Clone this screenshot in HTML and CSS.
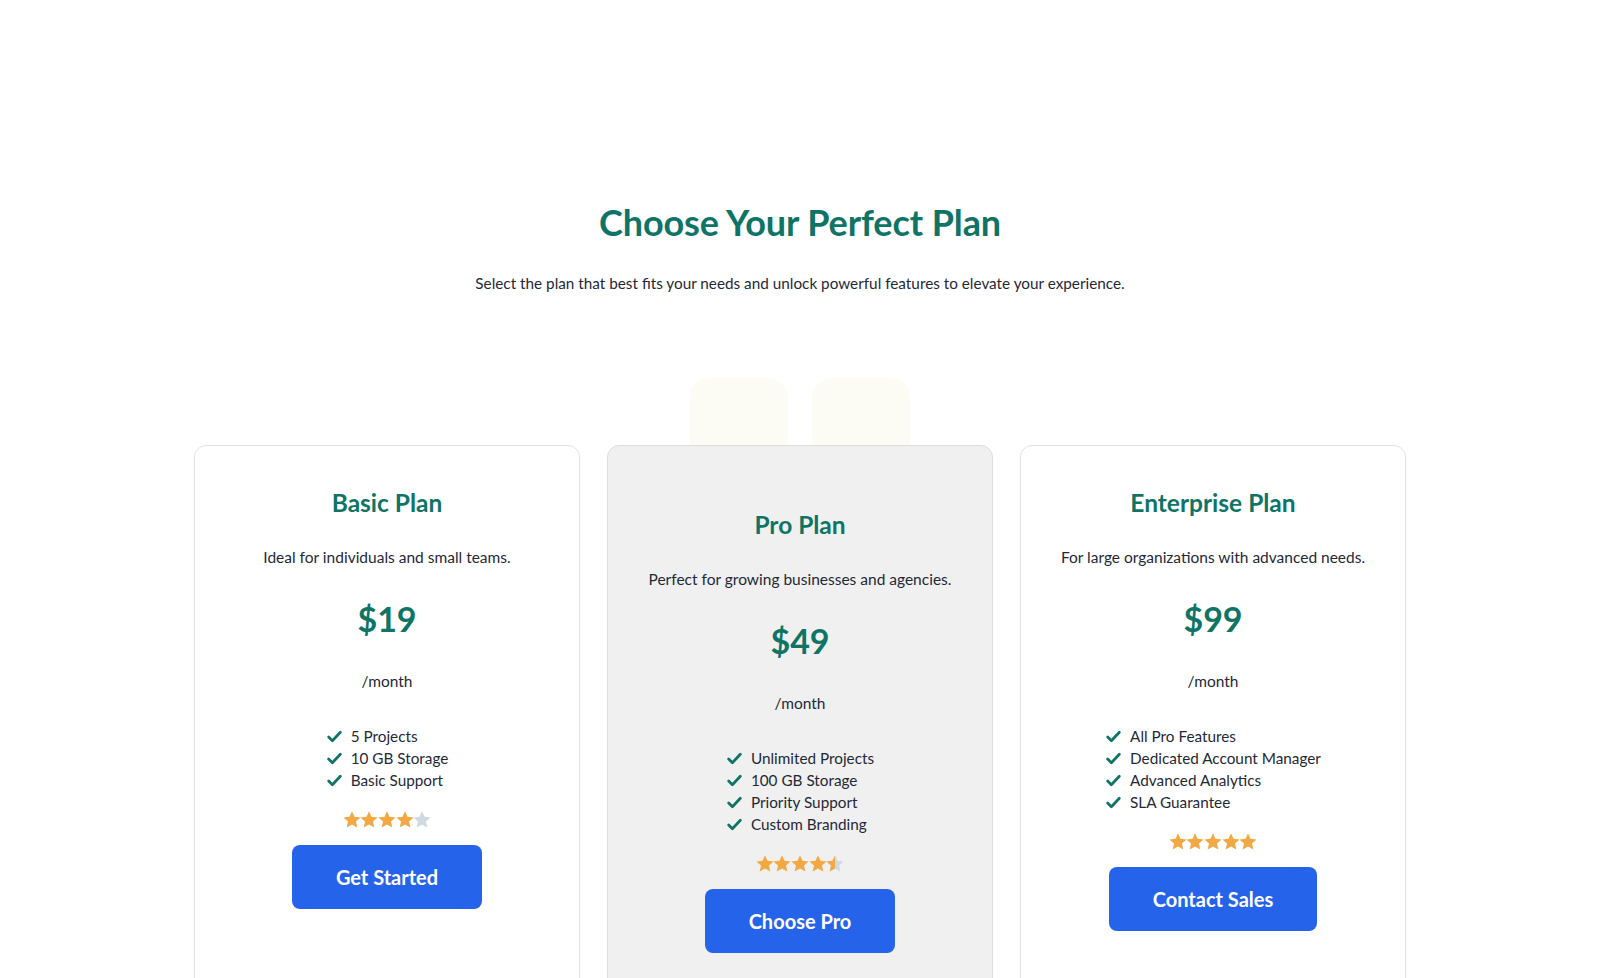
FILE: index.html
```html
<!DOCTYPE html>
<html lang="en">
<head>
<meta charset="utf-8">
<title>Choose Your Perfect Plan</title>
<link rel="stylesheet" href="styles.css">
</head>
<body>
<section class="pricing">
  <h1 class="title">Choose Your Perfect Plan</h1>
  <p class="subtitle">Select the plan that best fits your needs and unlock powerful features to elevate your experience.</p>

  <div class="cards-wrap">
    <div class="ghost ghost-a"></div>
    <div class="ghost ghost-b"></div>
    <div class="cards">
      <div class="card">
        <h3 class="plan-name">Basic Plan</h3>
        <p class="plan-desc">Ideal for individuals and small teams.</p>
        <div class="price">$19</div>
        <div class="period">/month</div>
        <ul class="features">
          <li><svg class="check" viewBox="0 0 16 16"><path d="M2.5 8.5l3.5 3.5 7.5-8"/></svg>5 Projects</li>
          <li><svg class="check" viewBox="0 0 16 16"><path d="M2.5 8.5l3.5 3.5 7.5-8"/></svg>10 GB Storage</li>
          <li><svg class="check" viewBox="0 0 16 16"><path d="M2.5 8.5l3.5 3.5 7.5-8"/></svg>Basic Support</li>
        </ul>
        <div class="stars">
          <svg class="star" viewBox="0 0 24 24"><path class="on" d="M12 1.5l3 6.7 7.3.7-5.5 4.9 1.6 7.2L12 17.3 5.6 21l1.6-7.2-5.5-4.9 7.3-.7z"/></svg>
          <svg class="star" viewBox="0 0 24 24"><path class="on" d="M12 1.5l3 6.7 7.3.7-5.5 4.9 1.6 7.2L12 17.3 5.6 21l1.6-7.2-5.5-4.9 7.3-.7z"/></svg>
          <svg class="star" viewBox="0 0 24 24"><path class="on" d="M12 1.5l3 6.7 7.3.7-5.5 4.9 1.6 7.2L12 17.3 5.6 21l1.6-7.2-5.5-4.9 7.3-.7z"/></svg>
          <svg class="star" viewBox="0 0 24 24"><path class="on" d="M12 1.5l3 6.7 7.3.7-5.5 4.9 1.6 7.2L12 17.3 5.6 21l1.6-7.2-5.5-4.9 7.3-.7z"/></svg>
          <svg class="star" viewBox="0 0 24 24"><path class="off" d="M12 1.5l3 6.7 7.3.7-5.5 4.9 1.6 7.2L12 17.3 5.6 21l1.6-7.2-5.5-4.9 7.3-.7z"/></svg>
        </div>
        <button class="btn">Get Started</button>
      </div>

      <div class="card card-pro">
        <h3 class="plan-name">Pro Plan</h3>
        <p class="plan-desc">Perfect for growing businesses and agencies.</p>
        <div class="price">$49</div>
        <div class="period">/month</div>
        <ul class="features">
          <li><svg class="check" viewBox="0 0 16 16"><path d="M2.5 8.5l3.5 3.5 7.5-8"/></svg>Unlimited Projects</li>
          <li><svg class="check" viewBox="0 0 16 16"><path d="M2.5 8.5l3.5 3.5 7.5-8"/></svg>100 GB Storage</li>
          <li><svg class="check" viewBox="0 0 16 16"><path d="M2.5 8.5l3.5 3.5 7.5-8"/></svg>Priority Support</li>
          <li><svg class="check" viewBox="0 0 16 16"><path d="M2.5 8.5l3.5 3.5 7.5-8"/></svg>Custom Branding</li>
        </ul>
        <div class="stars">
          <svg class="star" viewBox="0 0 24 24"><path class="on" d="M12 1.5l3 6.7 7.3.7-5.5 4.9 1.6 7.2L12 17.3 5.6 21l1.6-7.2-5.5-4.9 7.3-.7z"/></svg>
          <svg class="star" viewBox="0 0 24 24"><path class="on" d="M12 1.5l3 6.7 7.3.7-5.5 4.9 1.6 7.2L12 17.3 5.6 21l1.6-7.2-5.5-4.9 7.3-.7z"/></svg>
          <svg class="star" viewBox="0 0 24 24"><path class="on" d="M12 1.5l3 6.7 7.3.7-5.5 4.9 1.6 7.2L12 17.3 5.6 21l1.6-7.2-5.5-4.9 7.3-.7z"/></svg>
          <svg class="star" viewBox="0 0 24 24"><path class="on" d="M12 1.5l3 6.7 7.3.7-5.5 4.9 1.6 7.2L12 17.3 5.6 21l1.6-7.2-5.5-4.9 7.3-.7z"/></svg>
          <svg class="star" viewBox="0 0 24 24"><path class="off" d="M12 1.5l3 6.7 7.3.7-5.5 4.9 1.6 7.2L12 17.3 5.6 21l1.6-7.2-5.5-4.9 7.3-.7z"/><path class="on" d="M12 1.5v15.8L5.6 21l1.6-7.2-5.5-4.9 7.3-.7z"/></svg>
        </div>
        <button class="btn">Choose Pro</button>
      </div>

      <div class="card">
        <h3 class="plan-name">Enterprise Plan</h3>
        <p class="plan-desc">For large organizations with advanced needs.</p>
        <div class="price">$99</div>
        <div class="period">/month</div>
        <ul class="features">
          <li><svg class="check" viewBox="0 0 16 16"><path d="M2.5 8.5l3.5 3.5 7.5-8"/></svg>All Pro Features</li>
          <li><svg class="check" viewBox="0 0 16 16"><path d="M2.5 8.5l3.5 3.5 7.5-8"/></svg>Dedicated Account Manager</li>
          <li><svg class="check" viewBox="0 0 16 16"><path d="M2.5 8.5l3.5 3.5 7.5-8"/></svg>Advanced Analytics</li>
          <li><svg class="check" viewBox="0 0 16 16"><path d="M2.5 8.5l3.5 3.5 7.5-8"/></svg>SLA Guarantee</li>
        </ul>
        <div class="stars">
          <svg class="star" viewBox="0 0 24 24"><path class="on" d="M12 1.5l3 6.7 7.3.7-5.5 4.9 1.6 7.2L12 17.3 5.6 21l1.6-7.2-5.5-4.9 7.3-.7z"/></svg>
          <svg class="star" viewBox="0 0 24 24"><path class="on" d="M12 1.5l3 6.7 7.3.7-5.5 4.9 1.6 7.2L12 17.3 5.6 21l1.6-7.2-5.5-4.9 7.3-.7z"/></svg>
          <svg class="star" viewBox="0 0 24 24"><path class="on" d="M12 1.5l3 6.7 7.3.7-5.5 4.9 1.6 7.2L12 17.3 5.6 21l1.6-7.2-5.5-4.9 7.3-.7z"/></svg>
          <svg class="star" viewBox="0 0 24 24"><path class="on" d="M12 1.5l3 6.7 7.3.7-5.5 4.9 1.6 7.2L12 17.3 5.6 21l1.6-7.2-5.5-4.9 7.3-.7z"/></svg>
          <svg class="star" viewBox="0 0 24 24"><path class="on" d="M12 1.5l3 6.7 7.3.7-5.5 4.9 1.6 7.2L12 17.3 5.6 21l1.6-7.2-5.5-4.9 7.3-.7z"/></svg>
        </div>
        <button class="btn">Contact Sales</button>
      </div>
    </div>
  </div>
</section>
</body>
</html>
```

FILE: styles.css
```css
* { box-sizing: border-box; }
html, body {
  margin: 0;
  padding: 0;
  background: #ffffff;
  height: 978px;
  overflow: hidden;
}
body {
  font-family: "Lato", "Open Sans", sans-serif;
  color: #1f2937;
}
.pricing {
  display: flex;
  flex-direction: column;
  align-items: center;
  padding-top: 200px;
}
.title {
  margin: 0;
  font-size: 36px;
  line-height: 44px;
  font-weight: 700;
  color: #0f7466;
  letter-spacing: -0.1px;
}
.subtitle {
  margin: 28px 0 0;
  font-size: 15.3px;
  line-height: 22px;
  color: #1f2937;
}
.cards-wrap {
  position: relative;
  margin-top: 84px;
  padding-top: 67px;
  width: 1212px;
}
.ghost {
  position: absolute;
  top: 0;
  width: 98px;
  height: 90px;
  background: #fdfcf4;
  border-radius: 20px 20px 0 0;
}
.ghost-a { left: 496px; }
.ghost-b { left: 618px; }
.cards {
  position: relative;
  display: grid;
  grid-template-columns: repeat(3, 386px);
  column-gap: 27px;
}
.card {
  display: flex;
  flex-direction: column;
  align-items: center;
  height: 600px;
  padding-top: 42px;
  background: #ffffff;
  border: 1px solid #e2e2e2;
  border-radius: 12px;
}
.card-pro {
  padding-top: 64px;
  background: #f0f0f0;
  border-color: #dedede;
}
.plan-name {
  margin: 0;
  font-size: 24.5px;
  line-height: 30px;
  font-weight: 700;
  color: #0f7466;
}
.plan-desc {
  margin: 28px 0 0;
  font-size: 15.5px;
  line-height: 22px;
}
.price {
  margin-top: 30px;
  font-size: 34px;
  line-height: 42px;
  font-weight: 700;
  color: #0f7466;
}
.period {
  margin-top: 30px;
  font-size: 15.5px;
  line-height: 22px;
}
.features {
  list-style: none;
  margin: 33px 0 0;
  padding: 0;
  font-size: 15.3px;
  line-height: 22px;
}
.features li {
  display: flex;
  align-items: center;
}
.check {
  width: 17px;
  height: 17px;
  margin-right: 8px;
  fill: none;
  stroke: #0f7466;
  stroke-width: 2.6;
  stroke-linecap: round;
  stroke-linejoin: round;
}
.stars {
  display: flex;
  margin-top: 19px;
}
.star {
  width: 20px;
  height: 20px;
  margin: 0 -1.2px;
}
.star .on { fill: #f2a944; }
.star .off { fill: #cfd9e1; }
.btn {
  margin-top: 15px;
  height: 64px;
  padding: 0 44px;
  border: none;
  border-radius: 8px;
  background: #2563eb;
  color: #ffffff;
  font-family: inherit;
  font-size: 20px;
  font-weight: 700;
  cursor: pointer;
}
```
